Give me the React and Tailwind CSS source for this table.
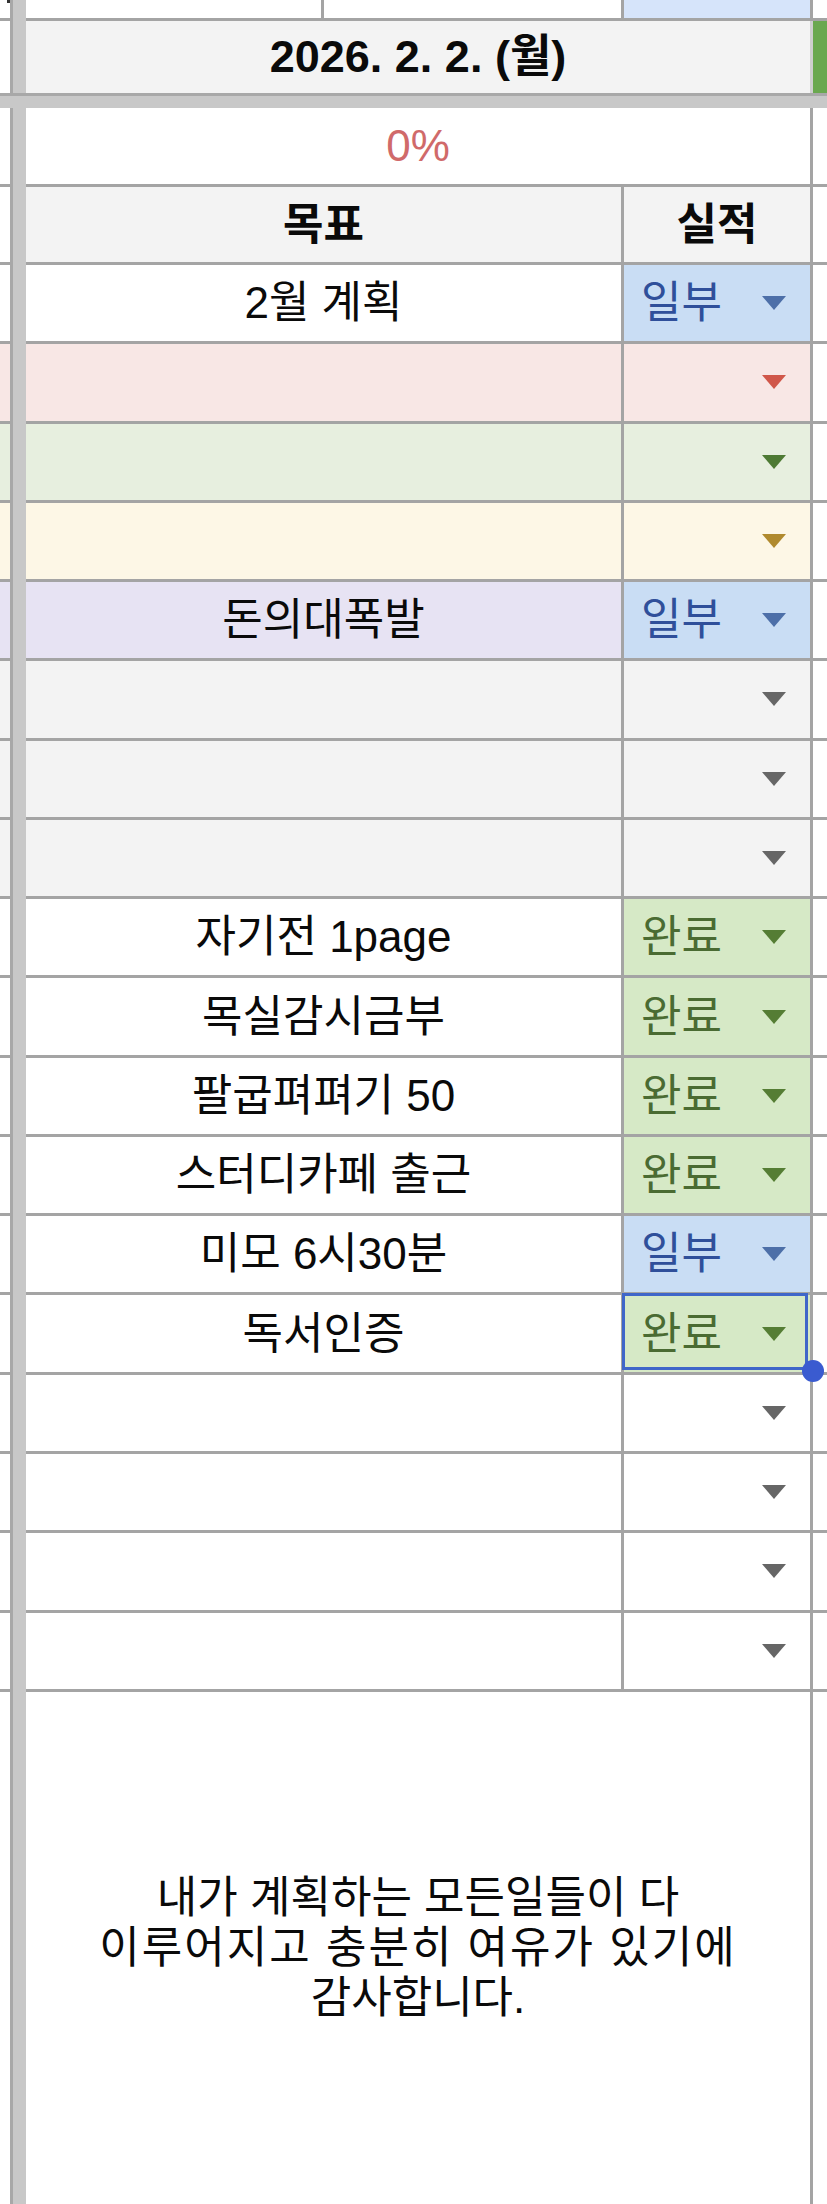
import React from "react";

const FONT = { fontFamily: '"Liberation Sans", "Noto Sans CJK KR", sans-serif' };

function Arrow({ color }) {
  return (
    <svg width="24" height="14" viewBox="0 0 24 14" className="shrink-0">
      <polygon points="0,0 24,0 12,14" fill={color} />
    </svg>
  );
}

const STATUS = {
  일부: { bg: "bg-[#c9ddf4]", text: "text-[#2f4f9a]", arrow: "#4d6fa8" },
  완료: { bg: "bg-[#d6e9c6]", text: "text-[#4a6b32]", arrow: "#557d34" },
};

const rows = [
  { goal: "2월 계획", status: "일부", rowBg: "bg-white", arrow: null },
  { goal: "", status: null, rowBg: "bg-[#f8e7e5]", arrow: "#d0574a" },
  { goal: "", status: null, rowBg: "bg-[#e7efdf]", arrow: "#4e7a34" },
  { goal: "", status: null, rowBg: "bg-[#fdf7e6]", arrow: "#b08a2e" },
  { goal: "돈의대폭발", status: "일부", rowBg: "bg-[#e7e3f3]", arrow: null },
  { goal: "", status: null, rowBg: "bg-[#f3f3f3]", arrow: "#666666" },
  { goal: "", status: null, rowBg: "bg-[#f3f3f3]", arrow: "#666666" },
  { goal: "", status: null, rowBg: "bg-[#f3f3f3]", arrow: "#666666" },
  { goal: "자기전 1page", status: "완료", rowBg: "bg-white", arrow: null },
  { goal: "목실감시금부", status: "완료", rowBg: "bg-white", arrow: null },
  { goal: "팔굽펴펴기 50", status: "완료", rowBg: "bg-white", arrow: null },
  { goal: "스터디카페 출근", status: "완료", rowBg: "bg-white", arrow: null },
  { goal: "미모 6시30분", status: "일부", rowBg: "bg-white", arrow: null },
  { goal: "독서인증", status: "완료", rowBg: "bg-white", arrow: null, selected: true },
  { goal: "", status: null, rowBg: "bg-white", arrow: "#666666" },
  { goal: "", status: null, rowBg: "bg-white", arrow: "#666666" },
  { goal: "", status: null, rowBg: "bg-white", arrow: "#666666" },
  { goal: "", status: null, rowBg: "bg-white", arrow: "#666666" },
];

function Divider() {
  return <div className="w-[16px] shrink-0 self-stretch bg-[#c8c8c8] border-l-[3px] border-[#a8a8a8]" />;
}

function DataRow({ r }) {
  const s = r.status ? STATUS[r.status] : null;
  return (
    <div className="flex h-[79.28px] shrink-0">
      <div className={`w-[10px] shrink-0 ${r.rowBg} border-b-[3px] border-[#a4a4a4]`} />
      <Divider />
      <div className={`w-[598px] shrink-0 ${r.rowBg} border-b-[3px] border-r-[3px] border-[#a4a4a4] flex items-center justify-center text-[44px] text-[#0a0a0a]`}>
        {r.goal}
      </div>
      <div className={`relative w-[189px] shrink-0 ${s ? s.bg : r.rowBg} border-b-[3px] border-r-[3px] border-[#a4a4a4] flex items-center justify-between pl-[17px] pr-[24px]`}>
        <span className={`text-[44px] leading-none ${s ? s.text : ""}`}>{r.status || ""}</span>
        <Arrow color={s ? s.arrow : r.arrow} />
        {r.selected && (
          <>
            <div className="absolute left-[-2px] top-[-2px] right-[2px] bottom-[2px] border-[3px] border-[#3f66c9]" />
            <div className="absolute right-[-14px] bottom-[-10px] w-[22px] h-[22px] rounded-full bg-[#3a5bd0] z-10" />
          </>
        )}
      </div>
      <div className="w-[14px] shrink-0 bg-white border-b-[3px] border-[#a4a4a4]" />
    </div>
  );
}

export default function App() {
  return (
    <div className="w-[827px] h-[2204px] bg-white overflow-hidden flex flex-col" style={FONT}>
      {/* top partial row */}
      <div className="flex h-[21px] shrink-0">
        <div className="w-[10px] shrink-0 bg-white border-b-[3px] border-[#a4a4a4] relative">
          <div className="absolute left-[7px] top-0 w-[3px] h-[3px] bg-[#333]" />
        </div>
        <Divider />
        <div className="w-[298px] shrink-0 bg-white border-b-[3px] border-r-[3px] border-[#a4a4a4]" />
        <div className="w-[300px] shrink-0 bg-white border-b-[3px] border-r-[3px] border-[#a4a4a4]" />
        <div className="w-[189px] shrink-0 bg-[#d6e4fa] border-b-[3px] border-r-[3px] border-[#a4a4a4]" />
        <div className="w-[14px] shrink-0 bg-white border-b-[3px] border-[#a4a4a4]" />
      </div>

      {/* date row */}
      <div className="flex h-[72px] shrink-0">
        <div className="w-[10px] shrink-0 bg-white" />
        <Divider />
        <div className="w-[787px] shrink-0 bg-[#f3f3f3] border-r-[3px] border-[#cfcfcf] flex items-center justify-center text-[45px] font-bold text-[#0a0a0a]">
          2026. 2. 2. (월)
        </div>
        <div className="w-[14px] shrink-0 bg-[#6aa84f]" />
      </div>

      {/* frozen bar */}
      <div className="h-[15px] shrink-0 bg-[#c8c8c8] border-t-[3px] border-[#a8a8a8]" />

      {/* percent row */}
      <div className="flex h-[79px] shrink-0">
        <div className="w-[10px] shrink-0 bg-white border-b-[3px] border-[#a4a4a4]" />
        <Divider />
        <div className="w-[787px] shrink-0 bg-white border-b-[3px] border-r-[3px] border-[#a4a4a4] flex items-center justify-center text-[44px] text-[#d06a6a]">
          0%
        </div>
        <div className="w-[14px] shrink-0 bg-white border-b-[3px] border-[#a4a4a4]" />
      </div>

      {/* header row */}
      <div className="flex h-[78px] shrink-0">
        <div className="w-[10px] shrink-0 bg-white border-b-[3px] border-[#a4a4a4]" />
        <Divider />
        <div className="w-[598px] shrink-0 bg-[#f3f3f3] border-b-[3px] border-r-[3px] border-[#a4a4a4] flex items-center justify-center text-[44px] font-bold text-[#0a0a0a]">
          목표
        </div>
        <div className="w-[189px] shrink-0 bg-[#f3f3f3] border-b-[3px] border-r-[3px] border-[#a4a4a4] flex items-center justify-center text-[44px] font-bold text-[#0a0a0a]">
          실적
        </div>
        <div className="w-[14px] shrink-0 bg-white border-b-[3px] border-[#a4a4a4]" />
      </div>

      {rows.map((r, i) => (
        <DataRow key={i} r={r} />
      ))}

      {/* bottom big cell */}
      <div className="flex flex-1">
        <div className="w-[10px] shrink-0 bg-white" />
        <Divider />
        <div className="w-[787px] shrink-0 bg-white border-r-[3px] border-[#a4a4a4] flex items-center justify-center text-center text-[44px] leading-[50px] text-[#0a0a0a]">
          <div>
            <div>내가 계획하는 모든일들이 다</div>
            <div className="tracking-[2px]">이루어지고 충분히 여유가 있기에</div>
            <div>감사합니다.</div>
          </div>
        </div>
        <div className="w-[14px] shrink-0 bg-white" />
      </div>
    </div>
  );
}
